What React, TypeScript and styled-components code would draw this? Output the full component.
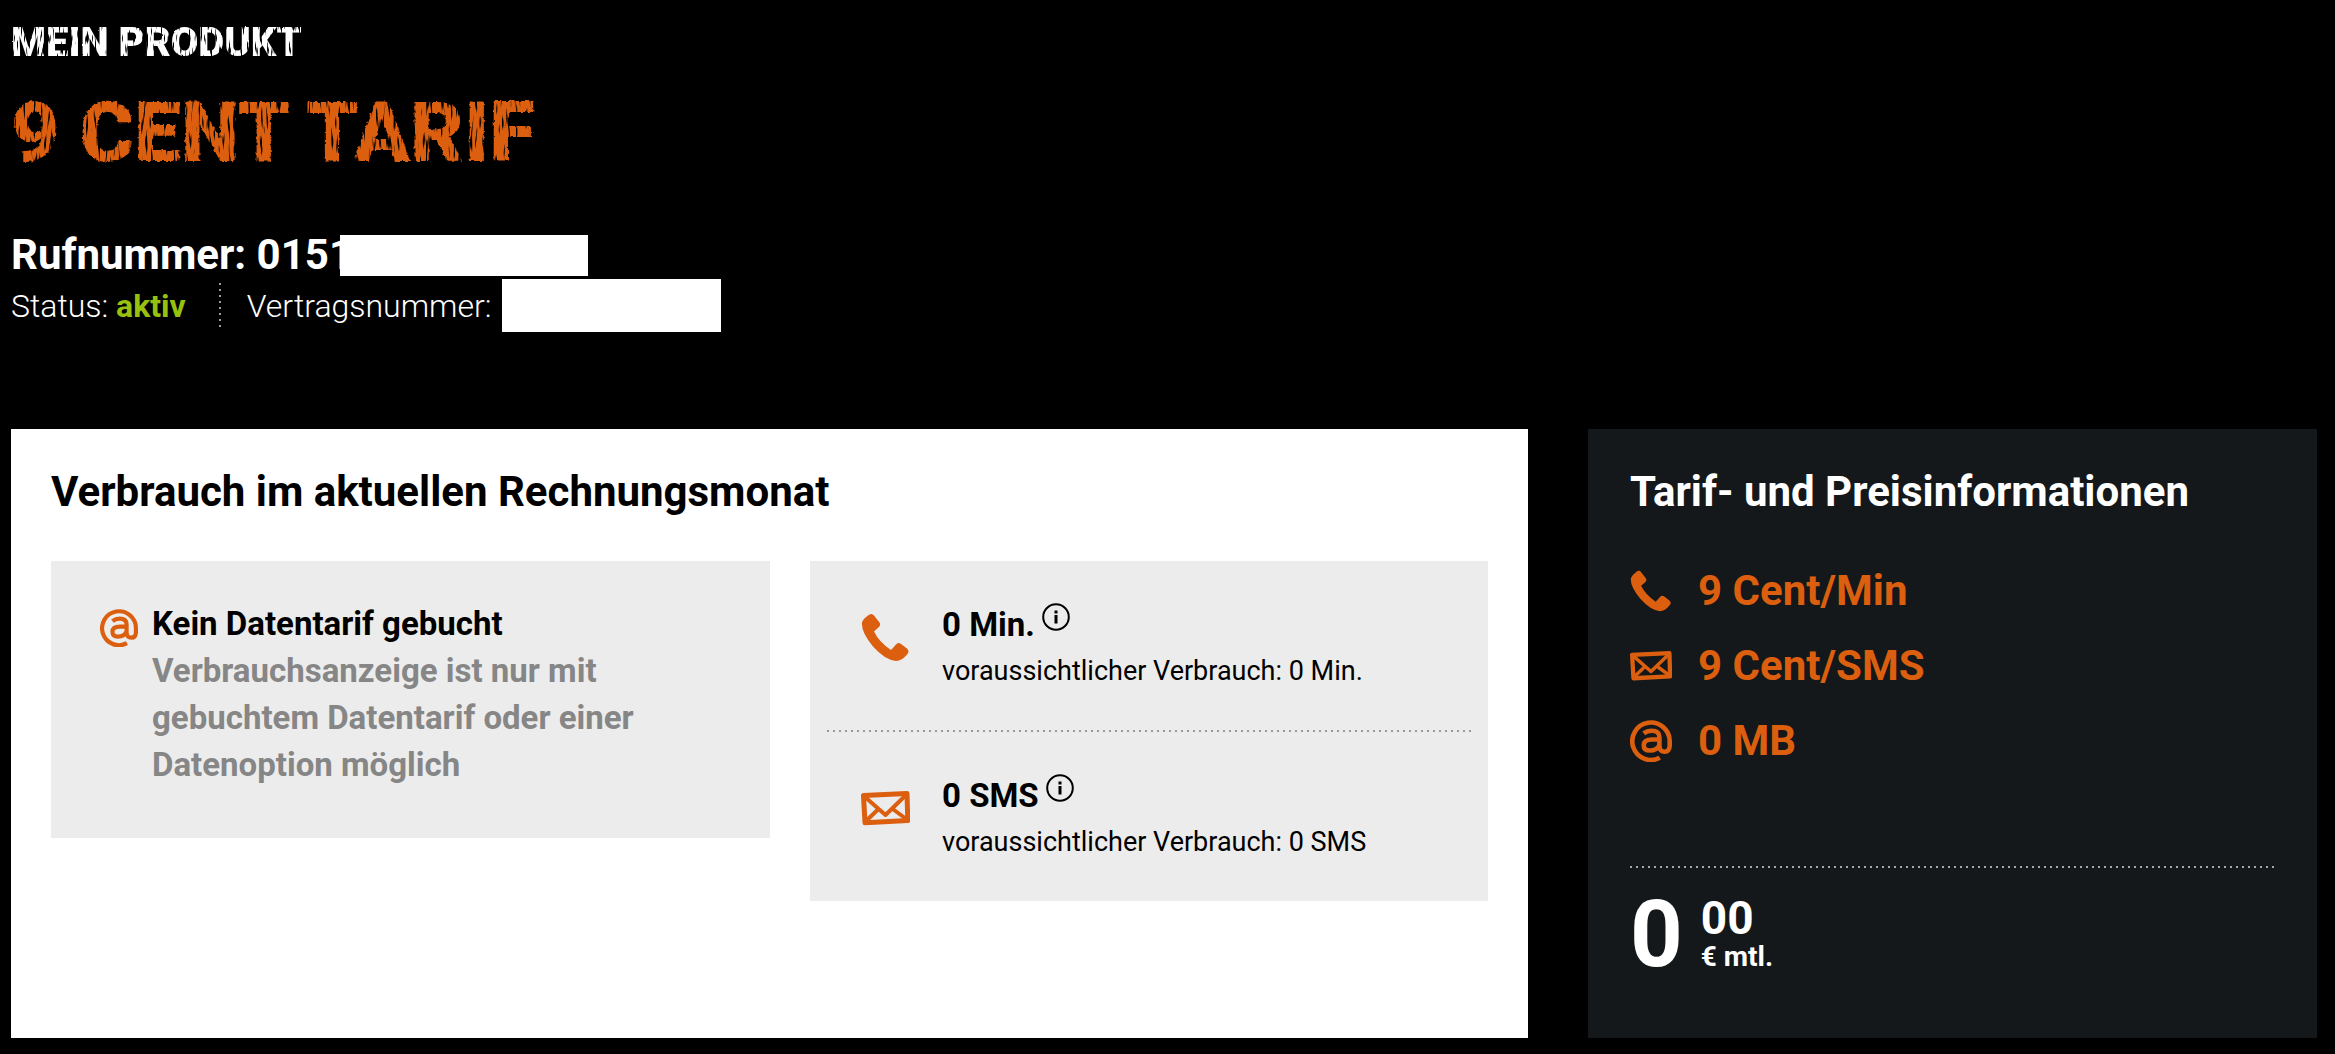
import React from "react";
import styled, { createGlobalStyle } from "styled-components";

const ORANGE = "#db5f0f";

const GlobalStyle = createGlobalStyle`
  *, *::before, *::after { box-sizing: border-box; }
  body {
    margin: 0;
    background: #000;
    color: #fff;
    font-family: Roboto, "Liberation Sans", sans-serif;
  }
  h1, h2, h3, p, ul { margin: 0; padding: 0; font-size: inherit; font-weight: inherit; }
`;

const Page = styled.main`
  padding: 20px 18px 16px 11px;
`;

const Header = styled.header`
  display: flex;
  flex-direction: column;
  align-items: flex-start;
`;

const Kicker = styled.p`
  && { font-size: 40px; font-weight: 900; }
  line-height: 46px;
  filter: url(#chalk-fine);
`;

const Title = styled.h1`
  && { margin-top: 27px; font-size: 83px; font-weight: 900; }
  line-height: 80px;
  color: ${ORANGE};
  filter: url(#chalk);
`;

const NumberLine = styled.div`
  display: flex;
  align-items: center;
  margin-top: 59px;
  font-size: 42px;
  line-height: 46px;
  font-weight: 700;
  white-space: pre;
`;

const StatusLine = styled.div`
  display: flex;
  align-items: center;
  margin-top: 1px;
  font-size: 32px;
  line-height: 40px;
  font-weight: 300;
  white-space: pre;
`;

const Redacted = styled.span<{ $width: number; $height: number; $gap: number }>`
  width: ${(p) => p.$width}px;
  height: ${(p) => p.$height}px;
  margin-left: ${(p) => p.$gap}px;
  background: #fff;
`;

const Active = styled.strong`
  font-weight: 700;
  color: #98c10f;
`;

const VerticalDots = styled.span`
  width: 2px;
  height: 46px;
  margin: 0 26px 0 33px;
  background: repeating-linear-gradient(to bottom, #9a9a9a 0 2px, transparent 2px 6px);
`;

const Cards = styled.div`
  display: grid;
  grid-template-columns: 1517fr 729fr;
  gap: 60px;
  margin-top: 97px;
`;

const Card = styled.section<{ $dark?: boolean }>`
  padding: ${(p) => (p.$dark ? "35px 41px 63px 42px" : "35px 40px 130px")};
  background: ${(p) => (p.$dark ? "#14181a" : "#fff")};
  color: ${(p) => (p.$dark ? "#fff" : "#000")};
`;

const CardTitle = styled.h2`
  && { font-size: 42px; font-weight: 700; }
  line-height: 56px;
`;

const Panels = styled.div`
  display: grid;
  grid-template-columns: 719fr 678fr;
  gap: 40px;
  align-items: start;
  margin-top: 41px;
`;

const DataPanel = styled.div`
  display: flex;
  gap: 14px;
  padding: 39px 49px 50px;
  background: #ececec;
  font-size: 33px;
  line-height: 47px;
  font-weight: 700;
`;

const Muted = styled.p`
  color: #868686;
`;

const UsagePanel = styled.div`
  background: #ececec;
`;

const Usage = styled.div`
  display: flex;
  gap: 32px;
  padding: 40px 51px 36px;
`;

const UsageHead = styled.div`
  display: flex;
  align-items: flex-start;
  gap: 7px;
`;

const UsageName = styled.h3`
  && { font-size: 33px; font-weight: 700; }
  line-height: 47px;
`;

const UsageNote = styled.p`
  && { font-size: 27px; font-weight: 400; }
  line-height: 46px;
`;

const InfoButton = styled.button`
  display: flex;
  margin: 2px 0 0;
  padding: 0;
  border: 0;
  background: none;
  color: inherit;
  cursor: pointer;
`;

const Dots = styled.hr<{ $inset?: number; $top?: number; $color: string }>`
  height: 2px;
  margin: ${(p) => p.$top ?? 0}px ${(p) => p.$inset ?? 0}px 0;
  border: 0;
  background: repeating-linear-gradient(to right, ${(p) => p.$color} 0 2px, transparent 2px 6px);
`;

const Icon = styled.svg<{ $size: number; $top?: number }>`
  flex: none;
  width: ${(p) => p.$size}px;
  height: ${(p) => p.$size}px;
  margin-top: ${(p) => p.$top ?? 0}px;
  color: ${ORANGE};
`;

const PriceList = styled.ul`
  margin-top: 33px;
  list-style: none;
  color: ${ORANGE};
`;

const PriceItem = styled.li`
  display: flex;
  align-items: center;
  gap: 26px;
  font-size: 42px;
  line-height: 75px;
  font-weight: 700;
`;

const Monthly = styled.div`
  display: flex;
  gap: 18px;
  padding-top: 27px;
  font-weight: 700;
`;

const Euros = styled.span`
  font-size: 92px;
  line-height: 80px;
`;

const Fraction = styled.span`
  display: flex;
  flex-direction: column;
`;

const Cents = styled.span`
  font-size: 46px;
  line-height: 46px;
`;

const Unit = styled.span`
  font-size: 28px;
  line-height: 32px;
`;

const Filters = styled.svg`
  position: absolute;
  width: 0;
  height: 0;
`;

type IconProps = { size: number; top?: number };

const PhoneIcon = ({ size, top }: IconProps) => (
  <Icon $size={size} $top={top} viewBox="0 0 49 49" fill="currentColor" aria-hidden="true">
    <path d="M7 2.5Q10.500-.5 13 2.500L18.500 9.500Q20 12 18 14L13 18.500Q18 29 30 37L35.500 31Q37.500 29 40 31L46 35.500Q49 38.500 46 41.500Q41 48 35 48Q24 47 12 33.500Q0 19 1 9.500Q2 6 7 2.500Z" />
  </Icon>
);

const MailIcon = ({ size, top }: IconProps) => (
  <Icon $size={size} $top={top} viewBox="0 0 49 49" fill="none" stroke="currentColor" strokeLinejoin="round" aria-hidden="true">
    <path strokeWidth="5" d="M2.500 11.500L46 9.500L46.800 36.500L4 38.800Z" />
    <path strokeWidth="4" d="M4 13L24.500 31L45 11M4.500 37.500L17.500 25M31 24.500L46 35.500" />
  </Icon>
);

const AtIcon = ({ size, top }: IconProps) => (
  <Icon $size={size} $top={top} viewBox="0 0 110 110" fill="none" stroke="currentColor" strokeWidth="12" aria-hidden="true">
    <path d="M78 99A49 49 0 1 1 104 55V68Q103 83 91 83Q78 83 77 69V45Q77 28 57 28Q45 28 36 35" />
    <path d="M77 51H58Q36 51 36 66Q36 80 52 80Q70 80 77 66" />
  </Icon>
);

const Info = ({ label }: { label: string }) => (
  <InfoButton type="button" aria-label={label}>
    <svg width="28" height="28" viewBox="0 0 28 28" aria-hidden="true">
      <circle cx="14" cy="14" r="12.800" fill="none" stroke="currentColor" strokeWidth="2" />
      <path fill="currentColor" d="M12.500 7.500h3v3h-3zM12.500 12h3v8.500h-3z" />
    </svg>
  </InfoButton>
);

const ChalkFilter = ({ id, freq, rough }: { id: string; freq: string; rough: number }) => (
  <filter id={id} x="-2%" y="-5%" width="104%" height="110%" colorInterpolationFilters="sRGB">
    <feTurbulence type="fractalNoise" baseFrequency={freq} numOctaves={1} seed={7} result="strokes" />
    <feColorMatrix in="strokes" type="matrix" values="0 0 0 0 1  0 0 0 0 1  0 0 0 0 1  8 0 0 0 -2.400" result="mask" />
    <feTurbulence type="fractalNoise" baseFrequency="0.3" numOctaves={1} seed={3} result="grain" />
    <feDisplacementMap in="SourceGraphic" in2="grain" scale={rough} xChannelSelector="R" yChannelSelector="G" result="edges" />
    <feComposite in="edges" in2="mask" operator="in" />
  </filter>
);

const usages = [
  { name: "0 Min.", icon: PhoneIcon },
  { name: "0 SMS", icon: MailIcon },
];

const prices = [
  { text: "9 Cent/Min", icon: PhoneIcon },
  { text: "9 Cent/SMS", icon: MailIcon },
  { text: "0 MB", icon: AtIcon },
];

export default function App() {
  return (
    <>
      <GlobalStyle />
      <Filters aria-hidden="true">
        <ChalkFilter id="chalk" freq="0.4 0.05" rough={4} />
        <ChalkFilter id="chalk-fine" freq="0.5 0.08" rough={2} />
      </Filters>
      <Page>
        <Header>
          <Kicker>MEIN PRODUKT</Kicker>
          <Title>9 CENT TARIF</Title>
          <NumberLine>
            <span>Rufnummer: 0151</span>
            <Redacted $width={248} $height={41} $gap={-13} />
          </NumberLine>
          <StatusLine>
            <span>Status: <Active>aktiv</Active></span>
            <VerticalDots />
            <span>Vertragsnummer:</span>
            <Redacted $width={219} $height={53} $gap={11} />
          </StatusLine>
        </Header>
        <Cards>
          <Card>
            <CardTitle>Verbrauch im aktuellen Rechnungsmonat</CardTitle>
            <Panels>
              <DataPanel>
                <AtIcon size={38} top={9} />
                <div>
                  <h3>Kein Datentarif gebucht</h3>
                  <Muted>Verbrauchsanzeige ist nur mit gebuchtem Datentarif oder einer Datenoption möglich</Muted>
                </div>
              </DataPanel>
              <UsagePanel>
                {usages.map(({ name, icon: UsageIcon }, i) => (
                  <React.Fragment key={name}>
                    {i > 0 && <Dots $inset={17} $color="#999" />}
                    <Usage>
                      <UsageIcon size={49} top={12} />
                      <div>
                        <UsageHead>
                          <UsageName>{name}</UsageName>
                          <Info label={`Info zu ${name}`} />
                        </UsageHead>
                        <UsageNote>voraussichtlicher Verbrauch: {name}</UsageNote>
                      </div>
                    </Usage>
                  </React.Fragment>
                ))}
              </UsagePanel>
            </Panels>
          </Card>
          <Card $dark>
            <CardTitle>Tarif- und Preisinformationen</CardTitle>
            <PriceList>
              {prices.map(({ text, icon: PriceIcon }) => (
                <PriceItem key={text}>
                  <PriceIcon size={42} />
                  {text}
                </PriceItem>
              ))}
            </PriceList>
            <Dots $top={88} $color="#a5a7a8" />
            <Monthly>
              <Euros>0</Euros>
              <Fraction>
                <Cents>00</Cents>
                <Unit>€ mtl.</Unit>
              </Fraction>
            </Monthly>
          </Card>
        </Cards>
      </Page>
    </>
  );
}
